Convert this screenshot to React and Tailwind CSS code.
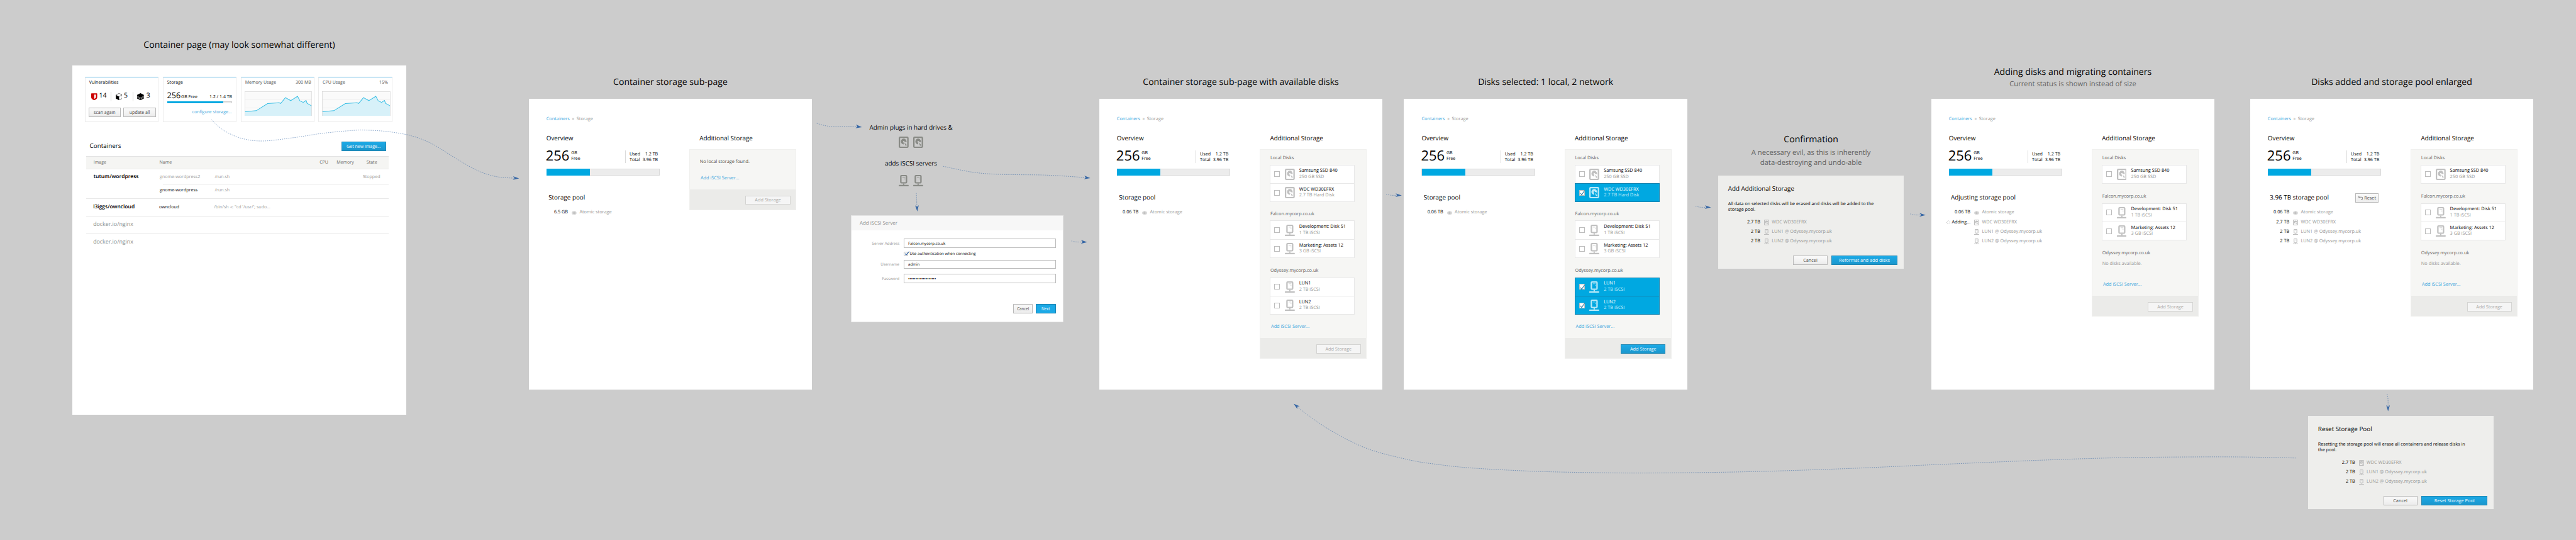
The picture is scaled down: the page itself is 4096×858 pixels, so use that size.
import React from "react";

/* ---------- icons ---------- */

function DiskIcon({ className }) {
  return (
    <svg viewBox="0 0 28 32" preserveAspectRatio="none" className={className} fill="currentColor" fillRule="evenodd">
      <path d="M4 0H24A4 4 0 0 1 28 4V28A4 4 0 0 1 24 32H4A4 4 0 0 1 0 28V4A4 4 0 0 1 4 0ZM4 3.8V28.2H24V3.8Z" />
      <path d="M14.4 22.2A8 8.2 0 1 1 21.8 16.2L16.3 14.4A2.1 2.1 0 1 0 13.6 16.6Z" />
      <path d="M15.4 16.6L22 22.6V25.6H19.4Z" />
    </svg>
  );
}

function ServerIcon({ className }) {
  return (
    <svg viewBox="0 0 28 32" preserveAspectRatio="none" className={className} fill="currentColor" fillRule="evenodd">
      <path d="M8 0H20A4 4 0 0 1 24 4V20A4 4 0 0 1 20 24H8A4 4 0 0 1 4 20V4A4 4 0 0 1 8 0ZM8 3.6V20.4H20V3.6Z" />
      <path d="M10.3 6.3H18.3V7.7H10.3ZM16.3 10H18.3V12H16.3ZM12.2 24H15.8V28H12.2Z" />
      <rect x="0" y="28" width="28" height="4" rx="0.8" />
    </svg>
  );
}

function AtomIcon({ className }) {
  return (
    <svg viewBox="0 0 14 12" className={className} fill="none" stroke="currentColor" strokeWidth="1.4">
      <ellipse cx="7" cy="6" rx="6.2" ry="2" transform="rotate(24 7 6)" />
      <ellipse cx="7" cy="6" rx="6.2" ry="2" transform="rotate(-24 7 6)" />
      <ellipse cx="7" cy="6" rx="1.8" ry="5.2" />
      <circle cx="7" cy="6" r="1.4" fill="currentColor" stroke="none" />
    </svg>
  );
}

function SpinnerIcon({ className }) {
  return (
    <svg viewBox="0 0 12 12" className={className} fill="#bdbdbd">
      <circle cx="6" cy="1.1" r="1" />
      <circle cx="9.5" cy="2.5" r="1" />
      <circle cx="10.9" cy="6" r="1" />
      <circle cx="9.5" cy="9.5" r="1" />
      <circle cx="6" cy="10.9" r="1" />
      <circle cx="2.5" cy="9.5" r="1" />
      <circle cx="1.1" cy="6" r="1" />
      <circle cx="2.5" cy="2.5" r="1" />
    </svg>
  );
}

function UndoIcon({ className }) {
  return (
    <svg viewBox="0 0 13 12" className={className} fill="none" stroke="#8a8a8a" strokeWidth="1.9">
      <path d="M2.2 4H8.6A3.3 3.3 0 0 1 8.6 10.9H7.4" />
      <path d="M0.2 0.2V5.6H5.8Z" fill="#8a8a8a" stroke="none" />
    </svg>
  );
}

function ShieldIcon({ className }) {
  return (
    <svg viewBox="0 0 17 20" className={className} fillRule="evenodd">
      <path d="M1.2 0.6Q8.5 0 15.8 0.6Q17 0.8 17 2V11.5C17 15.6 13 18.4 8.5 20C4 18.4 0 15.6 0 11.5V2Q0 0.8 1.2 0.6ZM8.5 4.2V16.2C11.6 14.8 13.4 13 13.4 10.6V4.2Z" fill="#cc0000" />
    </svg>
  );
}

function CubeIcon({ className }) {
  return (
    <svg viewBox="0 0 19 20" className={className}>
      <path d="M9.5 0.6L18.3 5V15L9.5 19.4L0.7 15V5Z" fill="#fff" stroke="#000" strokeWidth="1" />
      <path d="M0.6 5L9.5 9.6V19.5L0.6 15Z" fill="#000" />
      <path d="M9.5 9.6L18.3 5" stroke="#000" strokeWidth="1" />
    </svg>
  );
}

function StackIcon({ className }) {
  return (
    <svg viewBox="0 0 19 20" className={className}>
      <path d="M9.5 0L19 5V15L9.5 20L0 15V5Z" fill="#000" />
      <path d="M0 8.6L9.5 13.4L19 8.6M0 11.8L9.5 16.6L19 11.8" fill="none" stroke="#fff" strokeWidth="1" />
    </svg>
  );
}

function Device({ kind, className }) {
  if (kind === "disk") return <DiskIcon className={className} />;
  if (kind === "server") return <ServerIcon className={className} />;
  return <AtomIcon className={className} />;
}

/* ---------- shared controls ---------- */

function Button({ variant = "plain", className, children }) {
  const look = {
    plain: "border-[#b9b9b9] bg-gradient-to-b from-[#fafafa] to-[#ececec] text-[#4a4a4a]",
    primary: "border-[#1f86b2] bg-gradient-to-b from-[#1ba9e6] to-[#1b97cd] text-[#f3fbff]",
    disabled: "border-[#d4d4d2] bg-[#f5f5f5] text-[#a9a9a7]",
  }[variant];
  return (
    <button className={`flex items-center justify-center whitespace-nowrap border ${look} ${className}`}>{children}</button>
  );
}

/* ---------- storage frame ---------- */

function DiskRow({ kind, name, detail, selected }) {
  return (
    <li
      className={
        selected
          ? "relative -mt-px flex h-[53.5px] items-center border border-[#1484b0] bg-[#00a8e1] pl-[10.5px] text-[#b9e9f8]"
          : "-mt-px flex h-[53.5px] items-center border border-[#e8e8e8] bg-white pl-[10.5px] text-[#c0c0c0]"
      }
    >
      <span className="relative h-4 w-4 border border-[#bdbdbd] bg-white">
        {selected && (
          <svg viewBox="0 0 16 16" className="absolute -top-px -left-px h-4 w-4 overflow-visible" fill="none" stroke="#2377a0" strokeWidth="1.9">
            <path d="M3.4 8.4L7 13.6L15.6 1" />
          </svg>
        )}
      </span>
      <Device kind={kind} className="ml-[13.5px] h-8 w-7" />
      <div className="ml-[12.5px] leading-[17px] whitespace-nowrap">
        <div className={selected ? "text-white" : "text-black"}>{name}</div>
        <div className={selected ? "text-[#c4edfa]" : "text-[#969694]"}>{detail}</div>
      </div>
    </li>
  );
}

function DiskGroup({ title, disks, className }) {
  return (
    <section className={className}>
      <h3 className="pl-px leading-4 text-[#62625f]">{title}</h3>
      {disks.length > 0 ? (
        <ul className="mt-[11.4px] w-[239.5px]">
          {disks.map((d) => (
            <DiskRow key={d.name} {...d} />
          ))}
        </ul>
      ) : (
        <p className="mt-3.5 pl-px leading-4 text-[#969694]">No disks available.</p>
      )}
    </section>
  );
}

function PoolRow({ size, kind, label, busy }) {
  return (
    <li className="flex h-[26.8px] items-center whitespace-nowrap">
      <span className="flex w-[68px] items-center justify-end gap-1 text-black">
        {busy && <SpinnerIcon className="h-3 w-3" />}
        {size}
      </span>
      <span className="ml-[10.5px] flex w-3.5 justify-center text-[#bdbdbd]">
        <Device kind={kind} className={kind === "atom" ? "h-3 w-3.5" : "h-4 w-3.5"} />
      </span>
      <span className="ml-2 text-[#969694]">{label}</span>
    </li>
  );
}

function StorageFrame({ className, poolTitle = "Storage pool", reset, pool, children, linkClass, active }) {
  return (
    <main className={`absolute top-[278px] flex h-[820px] w-[800px] bg-white text-[13px] ${className}`}>
      <div className="w-[453.4px] pl-[50px]">
        <nav className="mt-[49px] flex h-5 items-center gap-[6.5px] text-[#969694]">
          <a className="text-[#39a5dc]">Containers</a>
          <span>»</span>
          <span>Storage</span>
        </nav>
        <h2 className="mt-[30.7px] text-[17.5px] leading-6 text-black">Overview</h2>
        <div className="mt-[22.3px] flex h-9 w-[320px] items-start">
          <strong className="-ml-[1.8px] text-[39px] leading-[31.6px] font-normal text-black">256</strong>
          <div className="ml-[5px] text-[12.5px] leading-4 text-black">
            <div>GB</div>
            <div>Free</div>
          </div>
          <dl className="mt-px ml-auto grid h-[35px] w-[97px] grid-cols-[auto_auto] justify-between border-l-2 border-[#dadada] pt-0.5 pr-[5px] pl-2.5 text-[12.7px] leading-[16.4px] text-black">
            <dt>Used</dt>
            <dd className="text-right">1.2 TB</dd>
            <dt>Total</dt>
            <dd className="text-right">3.96 TB</dd>
          </dl>
        </div>
        <div className="mt-[15px] h-5 w-[320px] border border-[#d9d9d9] bg-[#ececec]">
          <div className="-mt-px -ml-px h-5 w-[122px] bg-[#00a8e1]" />
        </div>
        <div className="mt-[50px] flex h-6 w-[313.5px] items-center justify-between pl-1.5">
          <h2 className="text-[17.5px] leading-6 whitespace-nowrap text-black">{poolTitle}</h2>
          {reset && (
            <Button className="mt-[3px] h-[26.5px] w-[66px] gap-1">
              <UndoIcon className="h-3 w-[13px]" />
              Reset
            </Button>
          )}
        </div>
        <ul className="mt-[17.6px] -ml-[7px]">
          {pool.map((p) => (
            <PoolRow key={p.label} {...p} />
          ))}
        </ul>
      </div>
      <div className="w-[302px]">
        <h2 className="mt-[99.7px] pl-[29px] text-[17.5px] leading-6 text-black">Additional Storage</h2>
        <div className="mt-[18.3px] border border-[#f0f0ee] bg-[#f6f6f4]">
          <div className="pb-[23.5px] pl-[27px]">
            {children}
            <a className={`block pl-[3px] leading-4 text-[#39a5dc] ${linkClass}`}>Add iSCSI Server...</a>
          </div>
          <footer className="flex h-[57px] justify-end bg-[#ebebe9] pt-[17.5px] pr-[15px]">
            <Button variant={active ? "primary" : "disabled"} className="h-[26px] w-[126.5px]">
              Add Storage
            </Button>
          </footer>
        </div>
      </div>
    </main>
  );
}

const samsung = { kind: "disk", name: "Samsung SSD 840", detail: "250 GB SSD" };
const falcon = [
  { kind: "server", name: "Development: Disk 51", detail: "1 TB iSCSI" },
  { kind: "server", name: "Marketing: Assets 12", detail: "3 GB iSCSI" },
];

function AllDisks({ selected }) {
  return (
    <>
      <DiskGroup
        className="pt-[16.5px]"
        title="Local Disks"
        disks={[samsung, { kind: "disk", name: "WDC WD30EFRX", detail: "2.7 TB Hard Disk", selected }]}
      />
      <DiskGroup className="mt-[25px]" title="Falcon.mycorp.co.uk" disks={falcon} />
      <DiskGroup
        className="mt-[27.5px]"
        title="Odyssey.mycorp.co.uk"
        disks={[
          { kind: "server", name: "LUN1", detail: "2 TB iSCSI", selected },
          { kind: "server", name: "LUN2", detail: "2 TB iSCSI", selected },
        ]}
      />
    </>
  );
}

function RemainingDisks() {
  return (
    <>
      <DiskGroup className="pt-[16.5px]" title="Local Disks" disks={[samsung]} />
      <DiskGroup className="mt-[28.2px]" title="Falcon.mycorp.co.uk" disks={falcon} />
      <DiskGroup className="mt-[27.5px]" title="Odyssey.mycorp.co.uk" disks={[]} />
    </>
  );
}

/* ---------- containers page ---------- */

function Card({ children }) {
  return (
    <section className="h-[127.7px] w-[208px] border border-t-[3px] border-[#ececec] border-t-[#5cb3e2] text-[12.5px]">
      {children}
    </section>
  );
}

function UsageChart({ className }) {
  const line = "M1 57.7L33 54.7L64.7 34.7L97.3 32.3L101.7 34.3L115 18L130 26.3L149.3 14.3L156 27L165.3 31.3L173.3 25.7L176.3 34L188.7 41";
  return (
    <svg viewBox="0 0 189.7 70.7" preserveAspectRatio="none" className={className}>
      <rect x="0.5" y="0.5" width="188.7" height="69.7" fill="#fafafa" />
      <path d="M1 23.7H189M1 47H189" stroke="#efefef" strokeWidth="1.6" />
      <path d={`${line}V70H1Z`} fill="#d7f1f9" />
      <path d={line} fill="none" stroke="#39bfe5" strokeWidth="1.8" />
      <rect x="0.5" y="0.5" width="188.7" height="69.7" fill="none" stroke="#cfcfcf" />
    </svg>
  );
}

function ContainerPage() {
  return (
    <main className="absolute top-[184px] left-[204px] h-[986px] w-[943px] bg-white px-[35px] pt-8 text-[12.6px] text-black">
      <div className="flex gap-3">
        <Card>
          <h3 className="mt-2 ml-[11px] leading-4">Vulnerabilities</h3>
          <div className="mt-[18px] ml-[17px] flex h-[26px] items-center text-[18.75px] leading-6">
            <ShieldIcon className="h-5 w-[17px]" />
            <span className="mb-[3px] ml-[5px] w-[33px]">14</span>
            <span className="h-[26px] w-[1.5px] bg-[#d8d8d4]" />
            <CubeIcon className="ml-3 h-5 w-[19px]" />
            <span className="mb-[3px] ml-[4.5px] w-[24px]">5</span>
            <span className="h-[26px] w-[1.5px] bg-[#d8d8d4]" />
            <StackIcon className="ml-[12.5px] h-5 w-[19px]" />
            <span className="mb-[3px] ml-[6.5px]">3</span>
          </div>
          <div className="mt-[18px] ml-[9px] flex gap-2">
            <Button className="h-[26.5px] w-[91px]">scan again</Button>
            <Button className="h-[26.5px] w-[91px]">update all</Button>
          </div>
        </Card>
        <Card>
          <h3 className="mt-2 ml-[11px] leading-4">Storage</h3>
          <div className="mt-[12.3px] ml-[10.5px] flex h-[30px] w-[184px] items-baseline leading-[16px] whitespace-nowrap">
            <span className="text-[22.5px] leading-[30px]">256</span>
            <span className="ml-[1.5px]">GB Free</span>
            <span className="ml-auto">1.2 / 1.4 TB</span>
          </div>
          <div className="mt-[1.7px] ml-[11px] h-[5px] w-[183px] border border-[#d0d0d0] bg-[#f7f7f7]">
            <div className="-mt-px -ml-px h-[5px] w-[157px] bg-[#00a8e1]" />
          </div>
          <a className="mt-[17.8px] mr-[11px] block text-right leading-4 text-[#39a5dc]">configure storage...</a>
        </Card>
        <Card>
          <h3 className="mt-2 mr-[7px] ml-[11px] flex justify-between leading-4 text-[#4a4a4a]">
            <span>Memory Usage</span>
            <span>300 MB</span>
          </h3>
          <UsageChart className="mt-[15px] ml-[9.3px] h-[70.7px] w-[189.7px]" />
        </Card>
        <Card>
          <h3 className="mt-2 mr-[10.5px] ml-[10px] flex justify-between leading-4 text-[#4a4a4a]">
            <span>CPU Usage</span>
            <span>15%</span>
          </h3>
          <UsageChart className="mt-[15px] ml-2 h-[70.7px] w-[193px]" />
        </Card>
      </div>

      <div className="mt-[55.3px] flex h-[26.7px] items-center justify-between pr-[22px] pl-3.5">
        <h2 className="mt-[-4px] text-[17.5px]">Containers</h2>
        <Button variant="primary" className="h-[26.7px] w-[127px] text-[12.5px]">
          Get new image...
        </Button>
      </div>

      <div className="mt-[14px] ml-[5px] w-[852.5px] whitespace-nowrap">
        <div className="flex h-[38px] items-center border-t-2 border-b-2 border-t-[#e3e3e3] border-b-[#ececea] bg-[#f5f5f3] pb-px pl-[20px] text-[#66665f]">
          <span className="w-[186px]">Image</span>
          <span className="w-[452px]">Name</span>
          <span className="w-[48px]">CPU</span>
          <span className="w-[84.5px]">Memory</span>
          <span>State</span>
        </div>
        <div className="flex h-[83.5px] border-b-2 border-[#e8e8e8]">
          <span className="mt-[10px] w-[207px] pl-[20px] text-[15px] leading-5 font-semibold">tutum/wordpress</span>
          <div className="flex-1">
            <div className="flex h-[42px] items-center text-[#9a9a98]">
              <span className="w-[155px]">gnome-wordpress2</span>
              <span className="flex-1">/run.sh</span>
              <span className="pr-[23.5px]">Stopped</span>
            </div>
            <div className="ml-[9px] h-[1.5px] bg-[#f0f0f0]" />
            <div className="flex h-[31px] items-center">
              <span className="w-[155px]">gnome-wordpress</span>
              <span className="text-[#9a9a98]">/run.sh</span>
            </div>
          </div>
        </div>
        <div className="flex h-[49px] items-center border-b-2 border-[#e8e8e8]">
          <span className="w-[205px] pl-[19px] text-[15px] font-semibold">l3iggs/owncloud</span>
          <span className="w-[155px]">owncloud</span>
          <span className="text-[#9a9a98]">/bin/sh -c "cd '/usr/'; sudo...</span>
        </div>
        <div className="flex h-[50px] items-center border-b-2 border-[#e8e8e8] pb-0.5 pl-[19px] text-[15.7px] text-[#8a8a88]">docker.io/nginx</div>
        <div className="flex h-[46px] items-center pl-[19px] text-[15.7px] text-[#8a8a88]">docker.io/nginx</div>
      </div>
    </main>
  );
}

/* ---------- dialogs ---------- */

function Field({ label, value, className }) {
  return (
    <label className={`flex h-[26px] items-center ${className}`}>
      <span className="w-[135px] text-right text-[#969696]">{label}</span>
      <span className="ml-[13px] flex h-[26px] w-[429px] items-center border border-[#bcbcbc] bg-white pl-2.5 text-black">{value}</span>
    </label>
  );
}

function ServerDialog() {
  return (
    <section className="absolute top-[606.5px] left-[2401.5px] h-[301.5px] w-[599px] border border-[#e4e4e4] bg-white text-[11px]">
      <h2 className="h-[42px] bg-[#f7f7f7] pt-[13px] pl-[23px] text-[14px] leading-5 text-[#8a8a8a]">Add iSCSI Server</h2>
      <Field className="mt-[22.5px]" label="Server Address" value="Falcon.mycorp.co.uk" />
      <label className="mt-[8px] ml-[148px] flex h-4 items-center text-black">
        <span className="relative mt-px h-[11px] w-[11px] border border-[#bcbcbc] bg-white">
          <svg viewBox="0 0 15 13" className="absolute -top-[2.5px] left-0 h-[13px] w-[15px]" fill="none" stroke="#3465a4" strokeWidth="2">
            <path d="M1.5 7L5.2 10.6L13.8 1" />
          </svg>
        </span>
        <span className="ml-[5px] whitespace-nowrap">Use authentication when connecting</span>
      </label>
      <Field className="mt-[10px]" label="Username" value="admin" />
      <Field className="mt-[14px]" label="Password" value="•••••••••••••••••••" />
      <div className="mt-[59px] mr-[19.5px] flex justify-end gap-2">
        <Button className="h-[26px] w-14 rounded-[1px]">Cancel</Button>
        <button className="flex h-[26px] w-14 items-center justify-center rounded-[1px] border border-[#1c86b5] bg-[#1ba9e6] text-[#f3fbff]">Next</button>
      </div>
    </section>
  );
}

function StorageDialog({ className, title, text, listClass, action }) {
  return (
    <section className={`absolute flex h-[262.5px] w-[524px] flex-col bg-[#eeeeec] text-[13px] text-black ${className}`}>
      <h2 className="mt-6 pl-[28px] text-[17.5px] leading-6">{title}</h2>
      <p className="mt-[23.5px] w-[460px] pl-[28px] text-[12.7px] leading-4">{text}</p>
      <ul className={`mt-[14.8px] ${listClass}`}>
        <PoolRow size="2.7 TB" kind="disk" label="WDC WD30EFRX" />
        <PoolRow size="2 TB" kind="server" label="LUN1 @ Odyssey.mycorp.uk" />
        <PoolRow size="2 TB" kind="server" label="LUN2 @ Odyssey.mycorp.uk" />
      </ul>
      <div className="mt-auto mb-3 flex justify-end gap-3 pr-[18px]">
        <Button className="h-[26px] w-24">Cancel</Button>
        <Button variant="primary" className="h-[26px] w-[186px]">
          {action}
        </Button>
      </div>
    </section>
  );
}

/* ---------- captions and connectors ---------- */

function Caption({ className, title, note, noteClass }) {
  return (
    <div className={`absolute text-center whitespace-nowrap ${className}`}>
      <div className="text-[25px] leading-[34px] text-black">{title}</div>
      {note && <div className={`text-[20px] leading-7 whitespace-pre-line text-[#62625f] ${noteClass}`}>{note}</div>}
    </div>
  );
}

function smooth(points) {
  let d = `M${points[0][0]} ${points[0][1]}`;
  for (let i = 0; i < points.length - 1; i++) {
    const p0 = points[i - 1] || points[i];
    const p1 = points[i];
    const p2 = points[i + 1];
    const p3 = points[i + 2] || p2;
    d += `C${p1[0] + (p2[0] - p0[0]) / 6} ${p1[1] + (p2[1] - p0[1]) / 6} ${p2[0] - (p3[0] - p1[0]) / 6} ${p2[1] - (p3[1] - p1[1]) / 6} ${p2[0]} ${p2[1]}`;
  }
  return d;
}

const connectors = [
  {
    points: [[596.7, 337.7], [630, 366.7], [680, 389.7], [741, 397.6], [826.7, 388.5], [910, 376], [993, 368], [1033, 367], [1093, 371], [1160, 382.7], [1220, 406], [1290, 449], [1350, 482], [1400, 498], [1450, 502.5]],
    tip: [1465, 503.4],
    angle: 4,
  },
  { points: [[2305, 348], [2331, 354.8], [2352, 356.3], [2413, 356.3], [2420, 357]], tip: [2432.3, 358.4], angle: 7 },
  { points: [[2662, 469], [2744.5, 485.5], [2823, 491.8], [2954, 493.9], [3064, 500.8]], tip: [3077, 502.4], angle: 7 },
  { points: [[2586, 544.5], [2587, 562], [2587.6, 583]], tip: [2588.7, 596.3], angle: 87 },
  { points: [[6737, 1111], [6739.4, 1125], [6739.7, 1147]], tip: [6739.7, 1160], angle: 90 },
  { points: [[3023.8, 679.6], [3037.4, 682.3], [3056, 682.5]], tip: [3068.2, 682.7], angle: 2 },
  { points: [[3912, 548], [3925.6, 550.6], [3944, 550.8]], tip: [3956, 551], angle: 2 },
  { points: [[4785, 581.6], [4798.6, 584.4], [4817, 584.6]], tip: [4828.8, 584.8], angle: 2 },
  { points: [[5391, 603.3], [5404.6, 606.1], [5423, 606.2]], tip: [5434.6, 606.4], angle: 2 },
  {
    points: [[6479, 1291.7], [6350, 1289], [6215, 1288.5], [5989, 1290.7], [5764, 1297.7], [5481, 1309.5], [5199, 1322], [4917, 1330.7], [4635, 1334], [4428, 1331.7], [4296, 1327.7], [4146, 1319.3], [4051, 1309], [3976, 1296.7], [3863, 1266.7], [3769, 1221.7], [3694, 1173], [3662, 1148]],
    tip: [3651, 1138.7],
    angle: 219,
  },
];

function Connectors() {
  return (
    <svg viewBox="0 0 7270 1522" className="pointer-events-none absolute inset-0 h-[1522px] w-[7270px]">
      {connectors.map((c) => (
        <g key={c.tip.join()}>
          <path d={smooth(c.points)} fill="none" stroke="#3465a4" strokeWidth="1" strokeDasharray="3 3" />
          <path d="M0 0L-17.5 5.2L-12.6 0L-17.5 -5.2Z" fill="#3465a4" transform={`translate(${c.tip[0]} ${c.tip[1]}) rotate(${c.angle})`} />
        </g>
      ))}
    </svg>
  );
}

const atomic = { size: "0.06 TB", kind: "atom", label: "Atomic storage" };

export default function App() {
  return (
    <div className="relative h-[1522px] w-[7270px] overflow-hidden bg-[#cccccc] font-['Open_Sans',sans-serif] [text-rendering:geometricPrecision] [zoom:0.563411]">
      <Caption className="top-[110px] left-[204px] w-[943px]" title="Container page (may look somewhat different)" />
      <ContainerPage />

      <Caption className="top-[215.5px] left-[1492px] w-[800px]" title="Container storage sub-page" />
      <StorageFrame className="left-[1492px]" pool={[{ ...atomic, size: "6.5 GB" }]} linkClass="mt-[29.7px]">
        <p className="pt-[27px] pl-px leading-4 text-[#4f4f4d]">No local storage found.</p>
      </StorageFrame>

      <div className="absolute top-[347px] left-[2421px] flex w-[300px] flex-col items-center text-[17.5px] leading-6 text-black">
        <span>Admin plugs in hard drives &amp;</span>
        <div className="mt-[15px] flex gap-3.5 text-[#888a85]">
          <DiskIcon className="h-8 w-7" />
          <DiskIcon className="h-8 w-7" />
        </div>
        <span className="mt-[31px]">adds iSCSI servers</span>
        <div className="mt-5 flex gap-3.5 text-[#888a85]">
          <ServerIcon className="h-8 w-7" />
          <ServerIcon className="h-8 w-7" />
        </div>
      </div>
      <ServerDialog />

      <Caption className="top-[215.5px] left-[3102px] w-[800px]" title="Container storage sub-page with available disks" />
      <StorageFrame className="left-[3102px]" pool={[atomic]} linkClass="mt-[26.3px]">
        <AllDisks />
      </StorageFrame>

      <Caption className="top-[215.5px] left-[3962px] w-[800px]" title="Disks selected: 1 local, 2 network" />
      <StorageFrame className="left-[3962px]" pool={[atomic]} linkClass="mt-[26.3px]" active>
        <AllDisks selected />
      </StorageFrame>

      <Caption
        className="top-[375.5px] left-[4849px] w-[524px]"
        title="Confirmation"
        note={"A necessary evil, as this is inherently\ndata-destroying and undo-able"}
        noteClass="mt-[7.7px]"
      />
      <StorageDialog
        className="top-[496px] left-[4849px]"
        listClass="pl-[50.8px]"
        title="Add Additional Storage"
        text="All data on selected disks will be erased and disks will be added to the storage pool."
        action="Reformat and add disks"
      />

      <Caption
        className="top-[186.5px] left-[5450px] w-[800px]"
        title="Adding disks and migrating containers"
        note="Current status is shown instead of size"
        noteClass="mt-1"
      />
      <StorageFrame
        className="left-[5450px]"
        poolTitle="Adjusting storage pool"
        pool={[
          atomic,
          { size: "Adding...", kind: "disk", label: "WDC WD30EFRX", busy: true },
          { size: "", kind: "server", label: "LUN1 @ Odyssey.mycorp.uk" },
          { size: "", kind: "server", label: "LUN2 @ Odyssey.mycorp.uk" },
        ]}
        linkClass="mt-[43.2px]"
      >
        <RemainingDisks />
      </StorageFrame>

      <Caption className="top-[215.5px] left-[6350px] w-[800px]" title="Disks added and storage pool enlarged" />
      <StorageFrame
        className="left-[6350px]"
        poolTitle="3.96 TB storage pool"
        reset
        pool={[
          atomic,
          { size: "2.7 TB", kind: "disk", label: "WDC WD30EFRX" },
          { size: "2 TB", kind: "server", label: "LUN1 @ Odyssey.mycorp.uk" },
          { size: "2 TB", kind: "server", label: "LUN2 @ Odyssey.mycorp.uk" },
        ]}
        linkClass="mt-[43.2px]"
      >
        <RemainingDisks />
      </StorageFrame>

      <StorageDialog
        className="top-[1174px] left-[6514px]"
        listClass="pl-[64.6px]"
        title="Reset Storage Pool"
        text="Resetting the storage pool will erase all containers and release disks in the pool."
        action="Reset Storage Pool"
      />

      <Connectors />
    </div>
  );
}
